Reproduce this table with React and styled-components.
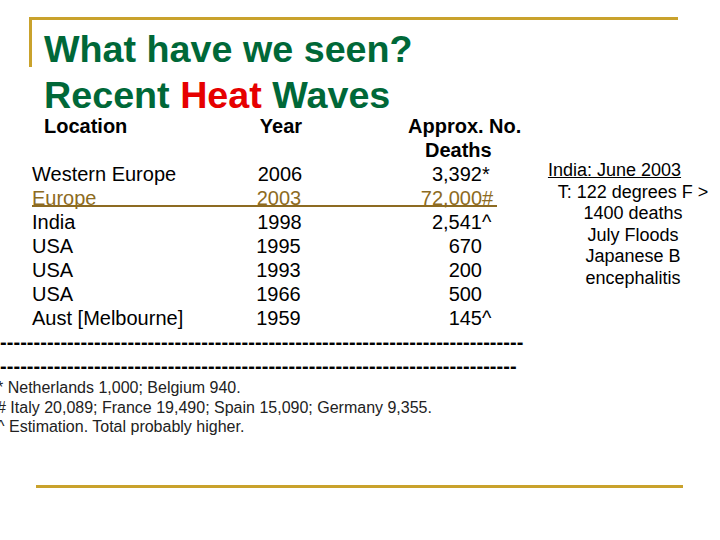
import styled, { createGlobalStyle, css } from "styled-components";

const GlobalStyle = createGlobalStyle`
  body {
    margin: 0;
    background: #ffffff;
    font-family: "Liberation Sans", Arial, sans-serif;
  }
`;

const gold = "#c9a22c";
const olive = "#8d6b22";

const Slide = styled.div`
  width: 720px;
  height: 540px;
  overflow: hidden;
  background: #ffffff;
  display: flex;
  flex-direction: column;
`;

const Header = styled.header`
  position: relative;
  margin: 17px 42px 0 29px;
  padding: 6px 0 0 15px;
  border-top: 3px solid ${gold};

  &::before {
    content: "";
    position: absolute;
    left: 0;
    top: 0;
    width: 3px;
    height: 47px;
    background: ${gold};
  }
`;

const Title = styled.h1`
  margin: 0;
  font-size: 37.7px;
  line-height: 46px;
  font-weight: bold;
  color: #006838;
`;

const Hot = styled.span`
  color: #e60000;
`;

const Content = styled.div`
  display: flex;
  margin-top: -4px;
`;

const Table = styled.div`
  width: 514px;
  margin-left: 32px;
  font-size: 20px;
  line-height: 24px;
  color: #000;
`;

const columns = "200px 93px 157px 64px";

const HeadRow = styled.div`
  display: grid;
  grid-template-columns: ${columns};
  grid-template-rows: 24px 24px;
  font-weight: bold;
`;

const HeadCell = styled.div`
  grid-column: ${(p) => p.$col};
  grid-row: 1;
  padding-left: ${(p) => p.$indent || 0}px;
  text-align: ${(p) => p.$align || "left"};
`;

const HeadDeaths = styled.div`
  grid-column: 3 / 5;
  grid-row: 1 / 3;
`;

const HeadLine = styled.div`
  padding-left: ${(p) => p.$indent}px;
`;

const Row = styled.div`
  display: grid;
  grid-template-columns: ${columns};
  height: 24px;
  white-space: nowrap;

  ${(p) =>
    p.$link &&
    css`
      color: ${olive};
      background: linear-gradient(${olive}, ${olive}) 0 19px / 465px 2px
        no-repeat;
    `}
`;

const Place = styled.div``;

const Year = styled.div`
  text-align: center;
  padding-left: ${(p) => p.$shift || 0}px;
`;

const Count = styled.div`
  text-align: right;
  padding-right: ${(p) => p.$shift || 0}px;
`;

const Mark = styled.div`
  text-align: left;
`;

const Note = styled.aside`
  width: 174px;
  margin-top: 46px;
  font-size: 18px;
  line-height: 21.6px;
  text-align: center;
  color: #000;
`;

const NoteTitle = styled.div`
  padding-right: 37px;

  span {
    text-decoration: underline;
  }
`;

const Rule = styled.div`
  font-size: 20px;
  line-height: 24px;
  font-weight: bold;
  letter-spacing: 0.05px;
  white-space: pre;
  color: #000;
`;

const Footnotes = styled.div`
  margin-left: -3px;
  font-size: 16px;
  line-height: 19.5px;
  color: #222;
  white-space: nowrap;
`;

const BottomLine = styled.div`
  height: 3px;
  margin: auto 37px 52px 36px;
  background: ${gold};
`;

const rows = [
  { place: "Western Europe", year: "2006", count: "3,392", mark: "*", shift: 3 },
  { place: "Europe", year: "2003", count: "72,000", mark: "#", link: true, shift: 1 },
  { place: "India", year: "1998", count: "2,541", mark: "^", shift: 2 },
  { place: "USA", year: "1995", count: "670", mark: "" },
  { place: "USA", year: "1993", count: "200", mark: "" },
  { place: "USA", year: "1966", count: "500", mark: "" },
  { place: "Aust [Melbourne]", year: "1959", count: "145", mark: "^" },
];

export default function App() {
  return (
    <>
      <GlobalStyle />
      <Slide>
        <Header>
          <Title>
            What have we seen?
            <br />
            Recent <Hot>Heat</Hot> Waves
          </Title>
        </Header>

        <Content>
          <Table>
            <HeadRow>
              <HeadCell $col={1} $indent={12}>
                Location
              </HeadCell>
              <HeadCell $col={2} $indent={5} $align="center">
                Year
              </HeadCell>
              <HeadDeaths>
                <HeadLine $indent={83}>Approx. No.</HeadLine>
                <HeadLine $indent={100}>Deaths</HeadLine>
              </HeadDeaths>
            </HeadRow>

            {rows.map((r, i) => (
              <Row key={i} $link={r.link}>
                <Place>{r.place}</Place>
                <Year $shift={r.shift}>{r.year}</Year>
                <Count>{r.count}</Count>
                <Mark>{r.mark}</Mark>
              </Row>
            ))}
          </Table>

          <Note>
            <NoteTitle>
              <span>India: June 2003</span>
            </NoteTitle>
            <div>T: 122 degrees F &gt;</div>
            <div>1400 deaths</div>
            <div>July Floods</div>
            <div>Japanese B</div>
            <div>encephalitis</div>
          </Note>
        </Content>

        <Rule>{"-".repeat(78)}</Rule>
        <Rule>{"-".repeat(77)}</Rule>

        <Footnotes>
          <div>* Netherlands 1,000; Belgium 940.</div>
          <div># Italy 20,089; France 19,490; Spain 15,090; Germany 9,355.</div>
          <div>^ Estimation. Total probably higher.</div>
        </Footnotes>

        <BottomLine />
      </Slide>
    </>
  );
}
